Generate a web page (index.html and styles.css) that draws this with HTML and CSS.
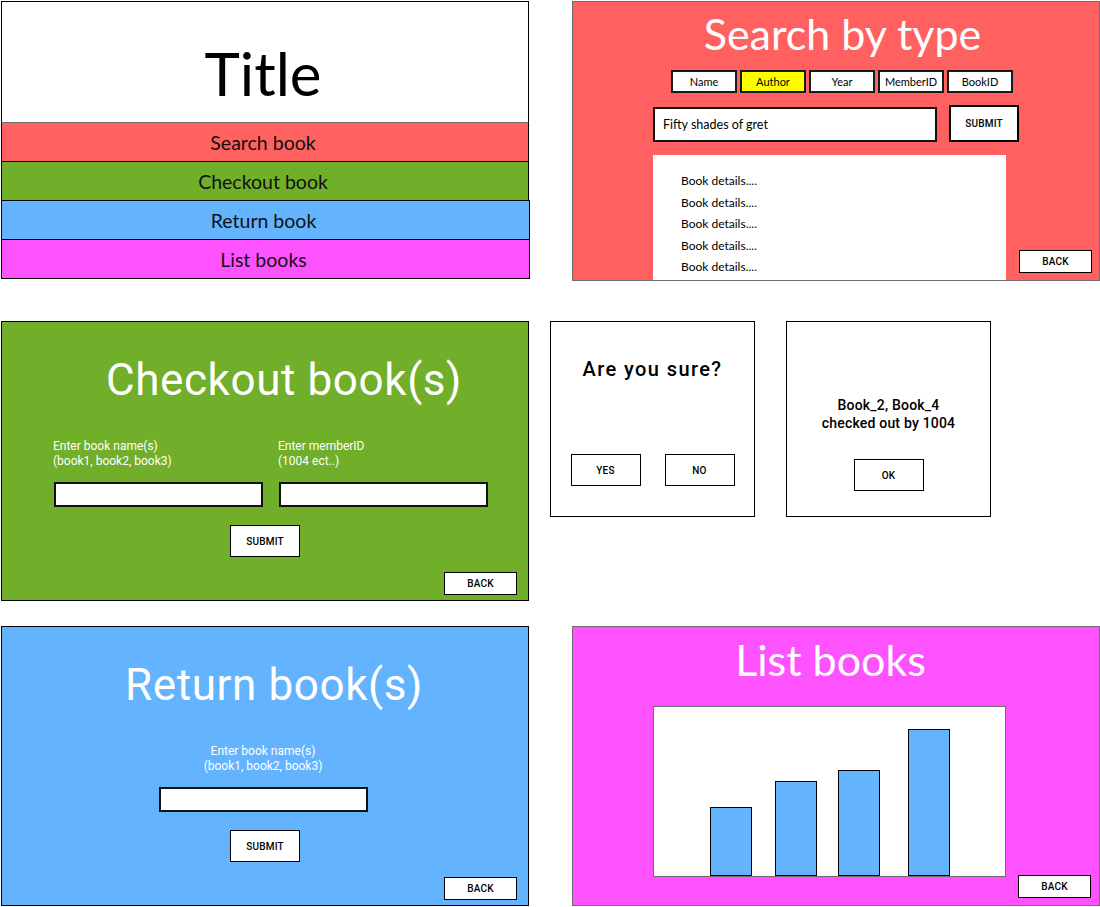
FILE: index.html
```html
<!DOCTYPE html>
<html lang="en">
<head>
<meta charset="utf-8">
<title>Library wireframes</title>
<link rel="stylesheet" href="styles.css">
</head>
<body>
<div class="board">

  <section class="screen menu">
    <div class="menu-title">Title</div>
    <div class="menu-bar bar-red">Search book</div>
    <div class="menu-bar bar-green">Checkout book</div>
    <div class="menu-bar bar-blue">Return book</div>
    <div class="menu-bar bar-pink">List books</div>
  </section>

  <section class="screen search">
    <h1 class="screen-title">Search by type</h1>
    <div class="tabs">
      <div class="tab">Name</div>
      <div class="tab tab-active">Author</div>
      <div class="tab">Year</div>
      <div class="tab">MemberID</div>
      <div class="tab">BookID</div>
    </div>
    <div class="query">
      <div class="query-input">Fifty shades of gret</div>
      <div class="btn btn-query">SUBMIT</div>
    </div>
    <div class="search-bottom">
      <ul class="results">
        <li>Book details....</li>
        <li>Book details....</li>
        <li>Book details....</li>
        <li>Book details....</li>
        <li>Book details....</li>
      </ul>
      <div class="btn btn-back">BACK</div>
    </div>
  </section>

  <section class="screen form checkout">
    <h1 class="form-title">Checkout book(s)</h1>
    <div class="fields">
      <div class="field">
        <div class="field-label">Enter book name(s)<br>(book1, book2, book3)</div>
        <div class="field-input"></div>
      </div>
      <div class="field">
        <div class="field-label">Enter memberID<br>(1004 ect..)</div>
        <div class="field-input"></div>
      </div>
    </div>
    <div class="btn btn-submit">SUBMIT</div>
    <div class="btn btn-back">BACK</div>
  </section>

  <section class="screen dialog confirm">
    <div class="confirm-text">Are you sure?</div>
    <div class="dialog-actions">
      <div class="btn btn-dialog">YES</div>
      <div class="btn btn-dialog">NO</div>
    </div>
  </section>

  <section class="screen dialog notice">
    <div class="notice-text">Book_2, Book_4<br>checked out by 1004</div>
    <div class="btn btn-dialog btn-ok">OK</div>
  </section>

  <section class="screen form return">
    <h1 class="form-title">Return book(s)</h1>
    <div class="fields">
      <div class="field">
        <div class="field-label">Enter book name(s)<br>(book1, book2, book3)</div>
        <div class="field-input"></div>
      </div>
    </div>
    <div class="btn btn-submit">SUBMIT</div>
    <div class="btn btn-back">BACK</div>
  </section>

  <section class="screen list">
    <h1 class="screen-title">List books</h1>
    <div class="chart-row">
      <div class="chart">
        <div class="bar" style="height:69px"></div>
        <div class="bar" style="height:95px"></div>
        <div class="bar" style="height:106px"></div>
        <div class="bar" style="height:147px"></div>
      </div>
      <div class="btn btn-back">BACK</div>
    </div>
  </section>

</div>
</body>
</html>
```

FILE: styles.css
```css
* { box-sizing: border-box; }

body {
  margin: 0;
  background: #fff;
  font-family: Lato, "Open Sans", sans-serif;
  color: #000;
}

.board {
  position: relative;
  width: 1100px;
  height: 907px;
  overflow: hidden;
}

.screen {
  position: absolute;
  display: flex;
  flex-direction: column;
}

/* ---------- main menu ---------- */
.menu {
  left: 1px;
  top: 1px;
  width: 529px;
}

.menu-title {
  height: 122px;
  border: 1px solid #000;
  background: #fff;
  font-size: 60px;
  line-height: 60px;
  text-align: center;
  padding-top: 41px;
  padding-right: 4px;
  width: 528px;
}

.menu-bar {
  height: 40px;
  margin-top: -1px;
  border: 1px solid #000;
  font-size: 19.5px;
  display: flex;
  align-items: center;
  justify-content: center;
  color: #111;
  padding-right: 4px;
}

.bar-red { background: #ff6161; border-top-color: #6d6d6d; width: 528px; }
.bar-green { background: #71ae29; width: 528px; }
.bar-blue { background: #63b3ff; }
.bar-pink { background: #ff52ff; }

/* ---------- shared ---------- */
.screen-title {
  margin: 0;
  color: #fff;
  font-weight: 400;
  font-size: 43px;
  line-height: 52px;
  text-align: center;
}

.btn {
  background: #fff;
  border: 1px solid #000;
  font-family: Roboto, "Noto Sans", sans-serif;
  font-weight: 500;
  font-size: 10px;
  letter-spacing: 0.2px;
  display: flex;
  align-items: center;
  justify-content: center;
}

.btn-back {
  width: 73px;
  height: 23px;
}

/* ---------- search ---------- */
.search {
  left: 572px;
  top: 1px;
  width: 528px;
  height: 280px;
  background: #ff6161;
  border: 1px solid #6d6d6d;
  padding-top: 6px;
}

.search .screen-title { padding-left: 13px; }

.tabs {
  display: flex;
  gap: 3px;
  margin: 10px 0 0 98px;
}

.tab {
  width: 66px;
  height: 23px;
  border: 2px solid #1a1a1a;
  background: #fff;
  font-size: 11px;
  display: flex;
  align-items: center;
  justify-content: center;
}

.tab-active { background: #ffff00; }

.query {
  display: flex;
  align-items: flex-end;
  gap: 12px;
  margin: 12px 0 0 80px;
}

.query-input {
  width: 284px;
  height: 35px;
  border: 2px solid #111;
  background: #fff;
  font-size: 12.5px;
  padding-left: 8px;
  display: flex;
  align-items: center;
}

.btn-query {
  width: 70px;
  height: 37px;
  border-width: 2px;
}

.search-bottom {
  flex: 1;
  min-height: 0;
  display: flex;
  align-items: flex-end;
  gap: 13px;
  margin: 13px 0 0 80px;
}

.results {
  width: 353px;
  align-self: stretch;
  margin: 0;
  padding: 15px 0 0 28px;
  list-style: none;
  background: #fff;
  font-size: 12px;
  line-height: 21.5px;
  overflow: hidden;
}

.search .btn-back { margin-bottom: 7px; }

/* ---------- checkout / return forms ---------- */
.form {
  left: 1px;
  width: 528px;
  height: 280px;
  border: 1px solid #000;
  padding-top: 33px;
}

.checkout { top: 321px; background: #71ae29; }
.return { top: 626px; background: #63b3ff; }

.form-title {
  margin: 0;
  color: #fff;
  font-family: Roboto, "Noto Sans", sans-serif;
  font-weight: 400;
  font-size: 44px;
  line-height: 50px;
  letter-spacing: 0.6px;
  text-align: center;
  margin-bottom: 1px;
}

.checkout .form-title { padding-left: 38px; }
.return .form-title { padding-left: 18px; }

.fields {
  display: flex;
  gap: 16px;
  margin: 33px 0 0 52px;
}

.return .fields {
  justify-content: center;
  margin-left: 0;
  padding-right: 3px;
}

.field {
  display: flex;
  flex-direction: column;
  width: 209px;
}

.field-label {
  font-family: Roboto, "Noto Sans", sans-serif;
  font-size: 12px;
  line-height: 15px;
  color: #fff;
  margin-left: -1px;
}

.return .field-label { text-align: center; }

.field-input {
  height: 25px;
  margin-top: 13px;
  border: 2px solid #111;
  background: #fff;
}

.btn-submit {
  width: 70px;
  height: 32px;
  align-self: center;
  margin-top: 18px;
}

.form .btn-back {
  align-self: flex-end;
  margin: 15px 11px 0 0;
}

/* ---------- dialogs ---------- */
.dialog {
  top: 321px;
  width: 205px;
  height: 196px;
  border: 1px solid #000;
  background: #fff;
  align-items: center;
  font-family: Roboto, "Noto Sans", sans-serif;
}

.confirm { left: 550px; padding-top: 35px; }
.notice { left: 786px; padding-top: 74px; }

.confirm-text {
  font-size: 20px;
  font-weight: 500;
  letter-spacing: 1.4px;
  line-height: 24px;
}

.dialog-actions {
  display: flex;
  gap: 24px;
  margin-top: 73px;
}

.btn-dialog {
  width: 70px;
  height: 32px;
}

.notice-text {
  font-size: 14px;
  font-weight: 500;
  line-height: 18px;
  letter-spacing: 0.2px;
  text-align: center;
}

.btn-ok { margin-top: 27px; }

/* ---------- list ---------- */
.list {
  left: 572px;
  top: 626px;
  width: 528px;
  height: 280px;
  background: #ff52ff;
  border: 1px solid #6d6d6d;
  padding-top: 7px;
}

.list .screen-title { padding-right: 11px; }

.chart-row {
  flex: 1;
  display: flex;
  align-items: flex-end;
  gap: 12px;
  margin: 20px 0 0 80px;
  padding-bottom: 7px;
}

.chart {
  align-self: flex-start;
  width: 353px;
  height: 171px;
  border: 1px solid #6d6d6d;
  background: #fff;
  display: flex;
  align-items: flex-end;
  padding-left: 56px;
}

.bar {
  width: 42px;
  border: 1px solid #000;
  background: #63b3ff;
}

.bar:nth-child(2) { margin-left: 23px; }
.bar:nth-child(3) { margin-left: 21px; }
.bar:nth-child(4) { margin-left: 28px; }
```
